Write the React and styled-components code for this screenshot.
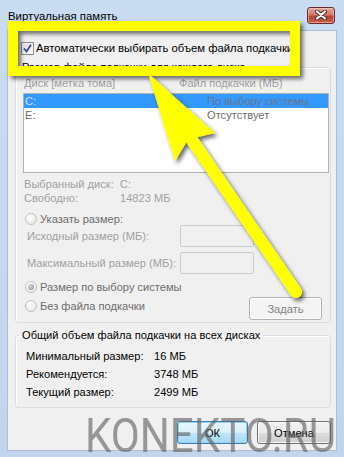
import React from 'react';
import styled, { createGlobalStyle } from 'styled-components';

const GlobalStyle = createGlobalStyle`
  html, body {
    margin: 0;
    padding: 0;
    background: #c6d9ef;
  }
  body {
    font-family: "Liberation Sans", "Noto Sans", Arial, sans-serif;
    font-size: 11.1px;
    color: #000;
    white-space: nowrap;
  }
`;

const Window = styled.div`
  position: relative;
  width: 344px;
  height: 457px;
  overflow: hidden;
  background: linear-gradient(#cadcf1, #c2d5ec);
  display: flex;
  flex-direction: column;
`;

const TitleBar = styled.div`
  height: 30px;
  display: flex;
  align-items: center;
  justify-content: space-between;
  padding: 0 9px 0 8px;
  box-sizing: border-box;
`;

const Title = styled.div`
  font-size: 11.4px;
  color: #000;
  padding-top: 1px;
`;

const CloseButton = styled.div`
  width: 28px;
  height: 17px;
  box-sizing: border-box;
  border: 1px solid #6b2b2b;
  border-radius: 3px;
  background: linear-gradient(#e4a89b 0%, #d17a69 45%, #b8402e 55%, #c8604c 100%);
  box-shadow: inset 0 0 0 1px rgba(255, 220, 210, 0.5);
  display: flex;
  align-items: center;
  justify-content: center;
`;

const Client = styled.div`
  margin: 0 7px;
  height: 421px;
  box-sizing: border-box;
  border: 1px solid #aabfd6;
  background: #f0f0f0;
  display: flex;
  flex-direction: column;
`;

const CheckRow = styled.label`
  margin: 9px 0 0 13px;
  height: 16px;
  display: flex;
  align-items: center;
  gap: 2px;
  line-height: 16px;
  font-size: 11.3px;
`;

const CheckBox = styled.span`
  width: 13px;
  height: 13px;
  box-sizing: border-box;
  border: 1px solid #8e8f8f;
  background: linear-gradient(135deg, #d9dde2, #ffffff);
  box-shadow: inset 0 0 0 1px #f4f4f4;
  display: flex;
  align-items: center;
  justify-content: center;
`;

const Group = styled.fieldset`
  margin: ${p => p.$top}px 5px 0 7px;
  padding: 0;
  min-width: 0;
  border: 1px solid #d5dfe5;
  border-radius: 3px;
  box-shadow: inset 1px 1px 0 #fff;
`;

const Legend = styled.legend`
  margin-left: 3px;
  padding: 0 3px;
  line-height: 16px;
  color: #000;
`;

const GroupBody = styled.div`
  padding: ${p => p.$pad};
  display: flex;
  flex-direction: column;
`;

const ColumnHeads = styled.div`
  display: grid;
  grid-template-columns: 155px 1fr;
  height: 16px;
  line-height: 16px;
  padding-left: 1px;
  color: #a0a0a0;
`;

const List = styled.div`
  margin-top: 2px;
  height: 80px;
  box-sizing: border-box;
  border: 1px solid #adb2b5;
  background: #fff;
`;

const ListRow = styled.div`
  display: grid;
  grid-template-columns: 182px 1fr;
  height: 14px;
  line-height: 14px;
  padding-left: 1px;
  background: ${p => (p.$selected ? '#3399ff' : 'transparent')};
  color: ${p => (p.$selected ? '#d6e6f8' : '#6d6d6d')};
`;

const Cell = styled.span`
  color: ${p => p.$color || 'inherit'};
`;

const InfoGrid = styled.div`
  margin-top: 4px;
  display: grid;
  grid-template-columns: 96px 1fr;
  line-height: 14px;
  padding-left: 1px;
  color: #a0a0a0;
`;

const RadioRow = styled.div`
  margin-top: ${p => p.$top || 0}px;
  height: 12px;
  line-height: 12px;
  display: flex;
  align-items: center;
  gap: 3px;
  padding-left: 2px;
  color: #6d6d6d;
`;

const Radio = styled.span`
  width: 12px;
  height: 12px;
  box-sizing: border-box;
  border-radius: 50%;
  border: 1px solid #c2c2c2;
  background: radial-gradient(circle at 35% 35%, #ffffff, #e2e2e2);
  display: flex;
  align-items: center;
  justify-content: center;
  &::after {
    content: '';
    display: ${p => (p.$on ? 'block' : 'none')};
    width: 6px;
    height: 6px;
    border-radius: 50%;
    background: radial-gradient(circle at 35% 35%, #d8d8d8, #8c8c8c);
  }
`;

const SizeRow = styled.div`
  margin-top: ${p => p.$top || 0}px;
  display: grid;
  grid-template-columns: 153px 74px;
  height: 22px;
  line-height: 22px;
  padding-left: 4px;
  color: #a0a0a0;
`;

const SizeInput = styled.div`
  height: 22px;
  box-sizing: border-box;
  border: 1px solid #c9cdd1;
  border-radius: 2px;
  background: #f0f0f0;
`;

const BottomArea = styled.div`
  margin-top: 7px;
  height: 39px;
  display: flex;
  justify-content: space-between;
  align-items: flex-end;
`;

const RadioColumn = styled.div`
  align-self: flex-start;
  display: flex;
  flex-direction: column;
`;

const Button = styled.div`
  width: ${p => p.$w}px;
  height: 23px;
  box-sizing: border-box;
  border-radius: 3px;
  display: flex;
  align-items: center;
  justify-content: center;
  border: 1px solid ${p => (p.$disabled ? '#adb2b5' : p.$focus ? '#3c7fb1' : '#707070')};
  background: ${p =>
    p.$disabled
      ? '#f4f4f4'
      : p.$focus
      ? 'linear-gradient(#eaf6fd 0%, #d9f0fc 50%, #bee6fd 51%, #a7d9f5 100%)'
      : 'linear-gradient(#f2f2f2 0%, #ebebeb 50%, #dddddd 51%, #cfcfcf 100%)'};
  box-shadow: inset 0 0 0 1px ${p => (p.$focus ? '#97d2f2' : 'rgba(255,255,255,0.8)')};
  color: ${p => (p.$disabled ? '#838383' : '#000')};
  margin-right: ${p => p.$mr || 0}px;
`;

const TotalGrid = styled.div`
  display: grid;
  grid-template-columns: 128px 1fr;
  line-height: 18px;
`;

const ButtonRow = styled.div`
  margin-top: 13px;
  display: flex;
  justify-content: flex-end;
  gap: 9px;
  padding-right: 5px;
`;

const Highlight = styled.div`
  position: absolute;
  left: 8px;
  top: 21px;
  width: 292px;
  height: 55px;
  box-sizing: border-box;
  border: 10px solid #ffff00;
  box-shadow: 3px 3px 4px rgba(0, 0, 0, 0.55), inset 3px 3px 4px rgba(0, 0, 0, 0.55);
  pointer-events: none;
`;

const ArrowLayer = styled.svg`
  position: absolute;
  left: 0;
  top: 0;
  pointer-events: none;
`;

const Watermark = styled.div`
  position: absolute;
  left: 85px;
  top: 411px;
  font-family: Roboto, "Liberation Sans", sans-serif;
  font-size: 49px;
  line-height: 49px;
  color: rgba(95, 95, 95, 0.62);
  transform: scaleX(0.86);
  transform-origin: left top;
  pointer-events: none;
`;

export default function App() {
  return (
    <>
      <GlobalStyle />
      <Window>
        <TitleBar>
          <Title>Виртуальная память</Title>
          <CloseButton>
            <svg width="14" height="10" viewBox="0 0 14 10">
              <path d="M3 1.5 L11 8.5 M11 1.5 L3 8.5" stroke="#4a2a2a" strokeWidth="4" strokeLinecap="round" />
              <path d="M3 1.5 L11 8.5 M11 1.5 L3 8.5" stroke="#fff" strokeWidth="2.2" strokeLinecap="round" />
            </svg>
          </CloseButton>
        </TitleBar>

        <Client>
          <CheckRow>
            <CheckBox>
              <svg width="9" height="9" viewBox="0 0 9 9">
                <path d="M1 4.5 L3.5 7.5 L8 0.8" stroke="#3c4d8a" strokeWidth="1.8" fill="none" />
              </svg>
            </CheckBox>
            <span>Автоматически выбирать объем файла подкачки</span>
          </CheckRow>

          <Group $top={3}>
            <Legend>Размер файла подкачки для каждого диска</Legend>
            <GroupBody $pad="0 1px 2px 7px">
              <ColumnHeads>
                <span>Диск [метка тома]</span>
                <span>Файл подкачки (МБ)</span>
              </ColumnHeads>
              <List>
                <ListRow $selected>
                  <span>C:</span>
                  <Cell $color="#6a7586">По выбору системы</Cell>
                </ListRow>
                <ListRow>
                  <span>E:</span>
                  <span>Отсутствует</span>
                </ListRow>
              </List>
              <InfoGrid>
                <span>Выбранный диск:</span>
                <span>C:</span>
                <span>Свободно:</span>
                <span>14823 МБ</span>
              </InfoGrid>
              <RadioRow $top={8}>
                <Radio />
                <span>Указать размер:</span>
              </RadioRow>
              <SizeRow>
                <span>Исходный размер (МБ):</span>
                <SizeInput />
              </SizeRow>
              <SizeRow $top={5}>
                <span>Максимальный размер (МБ):</span>
                <SizeInput />
              </SizeRow>
              <BottomArea>
                <RadioColumn>
                  <RadioRow>
                    <Radio $on />
                    <span>Размер по выбору системы</span>
                  </RadioRow>
                  <RadioRow $top={7}>
                    <Radio />
                    <span>Без файла подкачки</span>
                  </RadioRow>
                </RadioColumn>
                <Button $w={73} $disabled $mr={7}>Задать</Button>
              </BottomArea>
            </GroupBody>
          </Group>

          <Group $top={4}>
            <Legend>Общий объем файла подкачки на всех дисках</Legend>
            <GroupBody $pad="4px 0 6px 10px">
              <TotalGrid>
                <span>Минимальный размер:</span>
                <span>16 МБ</span>
                <span>Рекомендуется:</span>
                <span>3748 МБ</span>
                <span>Текущий размер:</span>
                <span>2499 МБ</span>
              </TotalGrid>
            </GroupBody>
          </Group>

          <ButtonRow>
            <Button $w={71} $focus>ОК</Button>
            <Button $w={74}>Отмена</Button>
          </ButtonRow>
        </Client>

        <Highlight />
        <Watermark>KONEKTO.RU</Watermark>

        <ArrowLayer width="344" height="457" viewBox="0 0 344 457">
          <defs>
            <filter id="arrowShadow" x="-20%" y="-20%" width="140%" height="140%">
              <feDropShadow dx="2.5" dy="3" stdDeviation="2" floodColor="#000" floodOpacity="0.6" />
            </filter>
          </defs>
          <g filter="url(#arrowShadow)" fill="#ffff00">
            <path d="M192 140 L296 292" stroke="#ffff00" strokeWidth="12" strokeLinecap="round" />
            <polygon points="148,73 215,133 198,137 186,143 175,161" />
          </g>
        </ArrowLayer>
      </Window>
    </>
  );
}
